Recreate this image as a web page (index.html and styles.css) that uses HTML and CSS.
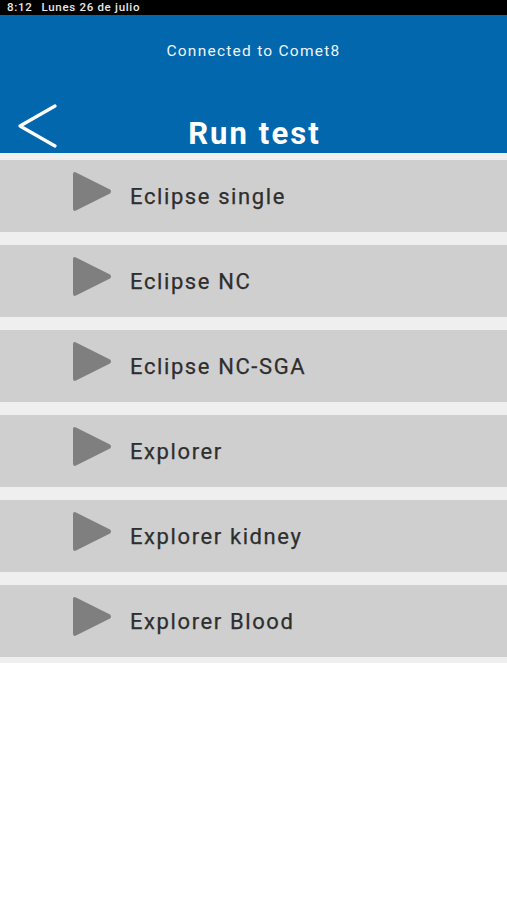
FILE: index.html
```html
<!DOCTYPE html>
<html>
<head>
<meta charset="utf-8">
<link rel="stylesheet" href="styles.css">
</head>
<body>
<div class="status">
  <span class="time">8:12</span>
  <span class="date">Lunes 26 de julio</span>
</div>
<header class="header">
  <div class="connected">Connected to Comet8</div>
  <div class="titlerow">
    <svg class="back" width="40" height="44" viewBox="0 0 40 44"><polyline points="38,2 3,22 38,42" fill="none" stroke="#fff" stroke-width="3.2" stroke-linecap="round" stroke-linejoin="round"/></svg>
    <h1 class="title">Run test</h1>
    <span></span>
  </div>
</header>
<main class="list">
  <div class="item"><svg class="play" width="40" height="41" viewBox="0 0 40 41"><path d="M4 1.5 L38 18.5 Q40 20.5 38 22.5 L4 39.5 Q1 41 1 37.5 L1 3.5 Q1 0 4 1.5 Z" fill="#7f7f7f"/></svg><span class="label">Eclipse single</span></div>
  <div class="item"><svg class="play" width="40" height="41" viewBox="0 0 40 41"><path d="M4 1.5 L38 18.5 Q40 20.5 38 22.5 L4 39.5 Q1 41 1 37.5 L1 3.5 Q1 0 4 1.5 Z" fill="#7f7f7f"/></svg><span class="label">Eclipse NC</span></div>
  <div class="item"><svg class="play" width="40" height="41" viewBox="0 0 40 41"><path d="M4 1.5 L38 18.5 Q40 20.5 38 22.5 L4 39.5 Q1 41 1 37.5 L1 3.5 Q1 0 4 1.5 Z" fill="#7f7f7f"/></svg><span class="label">Eclipse NC-SGA</span></div>
  <div class="item"><svg class="play" width="40" height="41" viewBox="0 0 40 41"><path d="M4 1.5 L38 18.5 Q40 20.5 38 22.5 L4 39.5 Q1 41 1 37.5 L1 3.5 Q1 0 4 1.5 Z" fill="#7f7f7f"/></svg><span class="label">Explorer</span></div>
  <div class="item"><svg class="play" width="40" height="41" viewBox="0 0 40 41"><path d="M4 1.5 L38 18.5 Q40 20.5 38 22.5 L4 39.5 Q1 41 1 37.5 L1 3.5 Q1 0 4 1.5 Z" fill="#7f7f7f"/></svg><span class="label">Explorer kidney</span></div>
  <div class="item"><svg class="play" width="40" height="41" viewBox="0 0 40 41"><path d="M4 1.5 L38 18.5 Q40 20.5 38 22.5 L4 39.5 Q1 41 1 37.5 L1 3.5 Q1 0 4 1.5 Z" fill="#7f7f7f"/></svg><span class="label">Explorer Blood</span></div>
</main>
</body>
</html>
```

FILE: styles.css
```css
* { box-sizing: border-box; }
html, body { margin: 0; padding: 0; background: #ffffff; }
body { font-family: Roboto, "Liberation Sans", sans-serif; width: 507px; }

.status {
  height: 15px;
  background: #000;
  color: #e8e8e8;
  font-size: 11.5px;
  font-weight: 500;
  letter-spacing: 0.7px;
  line-height: 15px;
  padding-left: 7px;
  display: flex;
  gap: 9px;
}

.header {
  height: 138px;
  background: #0267ad;
  color: #fff;
  display: flex;
  flex-direction: column;
}
.connected {
  text-align: center;
  font-size: 15.5px;
  line-height: 18px;
  letter-spacing: 1.25px;
  margin-top: 27px;
  color: #eef4fa;
}
.titlerow {
  margin-top: 44px;
  display: grid;
  grid-template-columns: 1fr auto 1fr;
  align-items: end;
  height: 47px;
}
.back { margin-left: 17px; align-self: start; display: block; }
.title {
  margin: 0;
  font-size: 31px;
  font-weight: 700;
  line-height: 30px;
  letter-spacing: 2.1px;
  padding-bottom: 2px;
  padding-left: 2px;
}

.list {
  background: #efefef;
  padding: 7px 0 6px;
  display: flex;
  flex-direction: column;
  gap: 13px;
}
.item {
  height: 72px;
  background: #cfcfcf;
  display: flex;
  align-items: center;
  padding-left: 72px;
}
.play { display: block; margin-top: -10px; }
.label {
  margin-left: 18px;
  font-size: 22px;
  color: #2e2e2e;
  letter-spacing: 1.6px;
  -webkit-text-stroke: 0.25px #2e2e2e;
}
```
